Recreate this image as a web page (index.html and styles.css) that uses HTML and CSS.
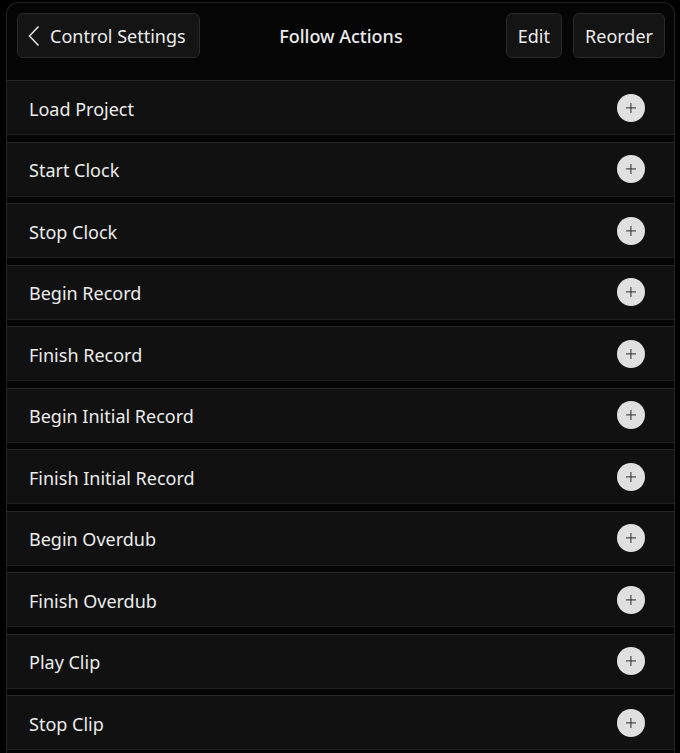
FILE: index.html
```html
<!DOCTYPE html>
<html>
<head>
<meta charset="utf-8">
<link rel="stylesheet" href="styles.css">
</head>
<body>
<div class="panel">
  <header class="topbar">
    <button class="btn back">
      <svg class="chev" width="12" height="22" viewBox="0 0 12 22"><path d="M10.5 1.5 L1.5 11 L10.5 20.5" fill="none" stroke="#e8e8e8" stroke-width="1.5"/></svg>
      <span>Control Settings</span>
    </button>
    <div class="title">Follow Actions</div>
    <div class="actions">
      <button class="btn">Edit</button>
      <button class="btn">Reorder</button>
    </div>
  </header>
  <ul class="list">
    <li class="row"><span class="label">Load Project</span><span class="add"></span></li>
    <li class="row"><span class="label">Start Clock</span><span class="add"></span></li>
    <li class="row"><span class="label">Stop Clock</span><span class="add"></span></li>
    <li class="row"><span class="label">Begin Record</span><span class="add"></span></li>
    <li class="row"><span class="label">Finish Record</span><span class="add"></span></li>
    <li class="row"><span class="label">Begin Initial Record</span><span class="add"></span></li>
    <li class="row"><span class="label">Finish Initial Record</span><span class="add"></span></li>
    <li class="row"><span class="label">Begin Overdub</span><span class="add"></span></li>
    <li class="row"><span class="label">Finish Overdub</span><span class="add"></span></li>
    <li class="row"><span class="label">Play Clip</span><span class="add"></span></li>
    <li class="row"><span class="label">Stop Clip</span><span class="add"></span></li>
  </ul>
</div>
</body>
</html>
```
FILE: styles.css
```css
html, body {
  margin: 0;
  padding: 0;
  background: #000;
  height: 753px;
  overflow: hidden;
}
body {
  font-family: "Noto Sans", "Open Sans", sans-serif;
  color: #ececec;
}
.panel {
  margin: 2px 5px 0 6px;
  border: 1px solid #232323;
  border-bottom: none;
  border-radius: 12px 12px 0 0;
  background: #050505;
  height: 760px;
  overflow: hidden;
}
.topbar {
  height: 67px;
  display: flex;
  align-items: flex-start;
  padding: 10px 9px 0 10px;
}
.btn {
  font-family: inherit;
  font-size: 18px;
  color: #ececec;
  background: #141414;
  border: 1px solid #2a2a2a;
  border-radius: 6px;
  height: 45px;
  padding: 0 11px;
  display: flex;
  align-items: center;
}
.back {
  width: 183px;
  padding-left: 10px;
  gap: 10px;
}
.chev { display: block; }
.title {
  flex: 1;
  text-align: center;
  font-size: 18px;
  font-weight: 500;
  line-height: 47px;
  padding-right: 24px;
}
.actions {
  display: flex;
  gap: 11px;
}
.list {
  list-style: none;
  margin: 0;
  padding: 0;
}
.row {
  height: 53px;
  box-sizing: content-box;
  background: #111;
  border-top: 1px solid #262626;
  border-bottom: 1px solid #1e1e1e;
  margin-bottom: 6.5px;
  display: flex;
  align-items: center;
  justify-content: space-between;
  padding: 0 29px 0 22px;
  font-size: 18px;
}
.label {
  position: relative;
  top: 1px;
}
.add {
  width: 28px;
  height: 28px;
  border-radius: 50%;
  background: #e0e0e0;
  position: relative;
}
.add::before, .add::after {
  content: "";
  position: absolute;
  background: #2a2a2a;
  left: 50%;
  top: 50%;
}
.add::before {
  width: 10px;
  height: 1.2px;
  transform: translate(-50%, -50%);
}
.add::after {
  width: 1.2px;
  height: 10px;
  transform: translate(-50%, -50%);
}
```
